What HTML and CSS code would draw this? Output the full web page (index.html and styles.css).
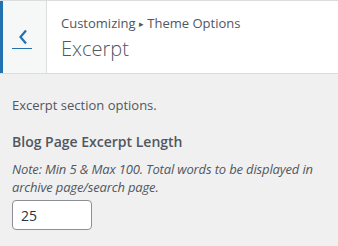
FILE: index.html
```html
<!DOCTYPE html>
<html lang="en">
<head>
    <meta charset="UTF-8">
    <meta name="viewport" content="width=device-width, initial-scale=1.0">
    <title>Customizing Excerpt</title>
    <link rel="stylesheet" href="styles.css">
</head>
<body>
    <div class="section-header">
        <button class="back-btn" aria-label="Back">
            <svg width="10" height="16" viewBox="0 0 10 16">
                <path d="M8 1.5 L2.5 8 L8 14.5" fill="none" stroke="#2271b1" stroke-width="2.2"/>
            </svg>
            <span class="back-line"></span>
        </button>
        <div class="section-title">
            <span class="crumbs">Customizing <span class="arrow">&#9656;</span> Theme Options</span>
            <h3>Excerpt</h3>
        </div>
    </div>
    <div class="section-body">
        <p class="description">Excerpt section options.</p>
        <div class="control">
            <label class="control-title" for="excerpt-length">Blog Page Excerpt Length</label>
            <p class="note">Note: Min 5 &amp; Max 100. Total words to be displayed in archive page/search page.</p>
            <input type="number" id="excerpt-length" class="num-input" value="25">
        </div>
    </div>
</body>
</html>
```

FILE: styles.css
```css
body {
    margin: 0;
    background: #f0f0f1;
    font-family: "Open Sans", sans-serif;
    color: #50575e;
}
.section-header {
    display: flex;
    height: 72px;
    background: #fff;
    border-top: 1px solid #dcdcde;
    border-bottom: 1px solid #dcdcde;
}
.back-btn {
    position: relative;
    width: 47px;
    padding: 0;
    margin: 0;
    background: #f6f7f7;
    border: none;
    border-left: 3px solid #2271b1;
    border-right: 1px solid #dcdcde;
    display: flex;
    align-items: center;
    justify-content: center;
    padding-right: 3px;
}
.back-line {
    position: absolute;
    left: 9px;
    top: 47px;
    width: 20px;
    height: 1px;
    background: #2271b1;
}
.section-title {
    padding: 13px 0 0 14px;
    display: flex;
    flex-direction: column;
}
.crumbs {
    font-size: 13px;
    line-height: 18px;
    color: #50575e;
}
.arrow {
    font-size: 9px;
    vertical-align: 1px;
}
.section-title h3 {
    margin: 3px 0 0;
    font-size: 20px;
    font-weight: 300;
    line-height: 26px;
    color: #50575e;
}
.section-body {
    padding: 0 12px;
}
.description {
    margin: 22px 0 0;
    font-size: 13px;
    line-height: 18px;
}
.control {
    margin-top: 18px;
}
.control-title {
    display: block;
    font-size: 14px;
    font-weight: 600;
    line-height: 20px;
}
.note {
    margin: 8px 0 4px;
    font-size: 13px;
    font-style: italic;
    letter-spacing: -0.15px;
    line-height: 18px;
}
.num-input {
    box-sizing: border-box;
    width: 80px;
    height: 30px;
    padding: 0 8px;
    border: 1px solid #8c8f94;
    border-radius: 4px;
    background: #fff;
    font-family: "Open Sans", sans-serif;
    font-size: 14px;
    color: #2c3338;
    -moz-appearance: textfield;
}
.num-input::-webkit-inner-spin-button {
    -webkit-appearance: none;
}
```
